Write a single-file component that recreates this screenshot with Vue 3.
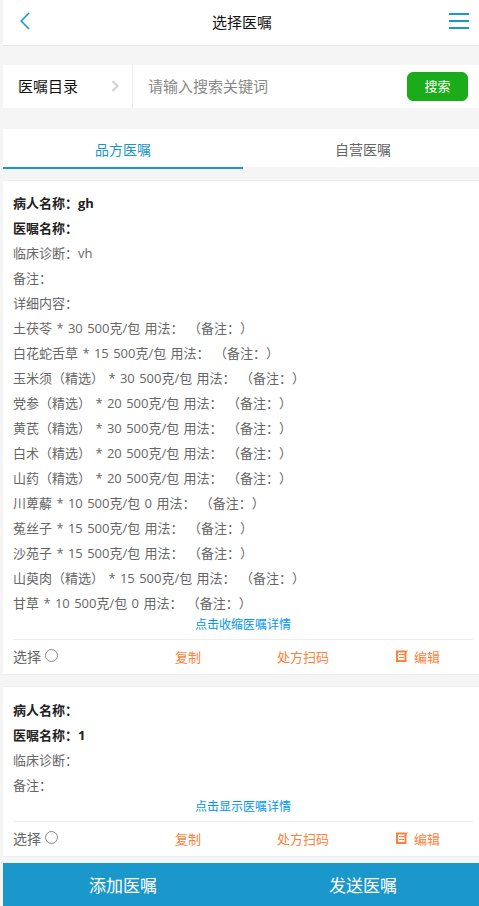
<script setup>
const herbs = [
  '土茯苓 * 30 500克/包 用法： （备注：）',
  '白花蛇舌草 * 15 500克/包 用法： （备注：）',
  '玉米须（精选） * 30 500克/包 用法： （备注：）',
  '党参（精选） * 20 500克/包 用法： （备注：）',
  '黄芪（精选） * 30 500克/包 用法： （备注：）',
  '白术（精选） * 20 500克/包 用法： （备注：）',
  '山药（精选） * 20 500克/包 用法： （备注：）',
  '川萆薢 * 10 500克/包 0 用法： （备注：）',
  '菟丝子 * 15 500克/包 用法： （备注：）',
  '沙苑子 * 15 500克/包 用法： （备注：）',
  '山萸肉（精选） * 15 500克/包 用法： （备注：）',
  '甘草 * 10 500克/包 0 用法： （备注：）'
]
</script>

<template>
  <div class="page">
    <header class="top">
      <svg class="back" width="10" height="18" viewBox="0 0 10 18"><path d="M9 1 1.2 9 9 17" fill="none" stroke="#1a98cc" stroke-width="1.6"/></svg>
      <span class="title">选择医嘱</span>
      <div class="menu"><i></i><i></i><i></i></div>
    </header>

    <section class="search">
      <div class="catalog">
        <span>医嘱目录</span>
        <svg width="8" height="12" viewBox="0 0 8 12"><path d="M1.5 1 6.5 6 1.5 11" fill="none" stroke="#d4d4d4" stroke-width="2.2"/></svg>
      </div>
      <div class="input">请输入搜索关键词</div>
      <button class="go">搜索</button>
    </section>

    <nav class="tabs">
      <div class="tab active">品方医嘱</div>
      <div class="tab">自营医嘱</div>
    </nav>

    <article class="card first">
      <p class="bold">病人名称：gh</p>
      <p class="bold">医嘱名称：</p>
      <p>临床诊断：vh</p>
      <p>备注：</p>
      <p>详细内容：</p>
      <p v-for="h in herbs" :key="h">{{ h }}</p>
      <a class="toggle">点击收缩医嘱详情</a>
      <div class="actions">
        <label class="pick">选择<span class="radio"></span></label>
        <span class="act copy">复制</span>
        <span class="act scan">处方扫码</span>
        <span class="act edit">
          <svg width="12" height="12" viewBox="0 0 12 12"><path d="M1 1.5h8.5v9.5H1z" fill="none" stroke="#ff8139" stroke-width="2"/><path d="M3 4.5h5M3 7.5h5" stroke="#ff8139" stroke-width="1"/><path d="m8 5 3.5-4.5" stroke="#ff8139" stroke-width="1"/></svg>
          编辑
        </span>
      </div>
    </article>

    <article class="card second">
      <p class="bold">病人名称：</p>
      <p class="bold">医嘱名称：1</p>
      <p>临床诊断：</p>
      <p>备注：</p>
      <a class="toggle">点击显示医嘱详情</a>
      <div class="actions">
        <label class="pick">选择<span class="radio"></span></label>
        <span class="act copy">复制</span>
        <span class="act scan">处方扫码</span>
        <span class="act edit">
          <svg width="12" height="12" viewBox="0 0 12 12"><path d="M1 1.5h8.5v9.5H1z" fill="none" stroke="#ff8139" stroke-width="2"/><path d="M3 4.5h5M3 7.5h5" stroke="#ff8139" stroke-width="1"/><path d="m8 5 3.5-4.5" stroke="#ff8139" stroke-width="1"/></svg>
          编辑
        </span>
      </div>
    </article>

    <footer class="bottom">
      <div>添加医嘱</div>
      <div>发送医嘱</div>
    </footer>
  </div>
</template>

<style>
body { background: #f5f5f5; }
</style>

<style scoped>
.page {
  width: 476px;
  height: 906px;
  margin-left: 3px;
  overflow: hidden;
  background: #f5f5f5;
  font-family: "Open Sans", "Noto Sans CJK SC", sans-serif;
  font-size: 14px;
  color: #666;
  text-spacing-trim: space-all;
}
.top {
  box-sizing: border-box;
  height: 46px;
  background: #fff;
  border-bottom: 1px solid #e4e4e4;
  display: flex;
  align-items: center;
  justify-content: space-between;
  padding: 0 10px 3px 17px;
}
.back { display: block; }
.title { color: #111; font-size: 15px; margin-left: 5px; }
.menu { width: 20px; display: flex; flex-direction: column; gap: 5px; }
.menu i { display: block; height: 2px; background: #1a98cc; }
.search {
  height: 43px;
  margin-top: 19px;
  background: #fff;
  display: flex;
  align-items: center;
}
.catalog {
  width: 130px;
  height: 100%;
  box-sizing: border-box;
  border-right: 1px solid #eee;
  display: flex;
  align-items: center;
  justify-content: space-between;
  padding: 0 13px 2px 15px;
  color: #111;
  font-size: 15px;
}
.input { flex: 1; padding: 0 0 2px 15px; color: #888; font-size: 15px; }
.go {
  width: 61px;
  height: 29px;
  margin-right: 11px;
  border: 1px solid #1ba91b;
  border-radius: 6px;
  background: #1aad19;
  color: #fff;
  font: inherit;
  font-size: 13px;
  padding: 0 0 2px;
}
.tabs {
  height: 40px;
  margin-top: 21px;
  display: flex;
}
.tab {
  flex: 0 0 240px;
  box-sizing: border-box;
  height: 38px;
  background: #fff;
  text-align: center;
  line-height: 41px;
  font-size: 14px;
}
.tab.active { height: 40px; color: #1a98cc; border-bottom: 2px solid #1a98cc; }
.card {
  background: #fff;
  padding: 10px 6px 0 10px;
  border-top: 1px solid #eee;
  border-bottom: 1px solid #eee;
}
.first { margin-top: 11px; height: 483px; }
.second { margin-top: 11px; padding-top: 11px; height: 158px; }
.card p {
  margin: 0;
  height: 25px;
  line-height: 25px;
  font-size: 13px;
  white-space: pre;
  word-spacing: 1px;
}
.card p.bold { color: #222; font-weight: 700; }
.toggle {
  display: block;
  height: 17px;
  line-height: 17px;
  text-align: center;
  color: #0096f5;
  font-size: 12px;
}
.actions {
  margin-top: 6px;
  height: 32px;
  border-top: 1px solid #eee;
  display: grid;
  grid-template-columns: 162px 102px 119px 80px;
  align-items: center;
  font-size: 13px;
}
.pick { display: flex; align-items: center; gap: 4px; font-size: 14px; }
.radio {
  display: block;
  width: 11px;
  height: 11px;
  border: 1px solid #888;
  border-radius: 50%;
  margin-top: -1px;
}
.act { color: #ff8139; }
.edit { display: flex; align-items: center; gap: 6px; }
.bottom {
  height: 43px;
  margin-top: 6px;
  background: #1b98cb;
  color: #fff;
  display: flex;
  font-size: 17px;
}
.bottom div { flex: 0 0 240px; text-align: center; line-height: 46px; }
</style>
